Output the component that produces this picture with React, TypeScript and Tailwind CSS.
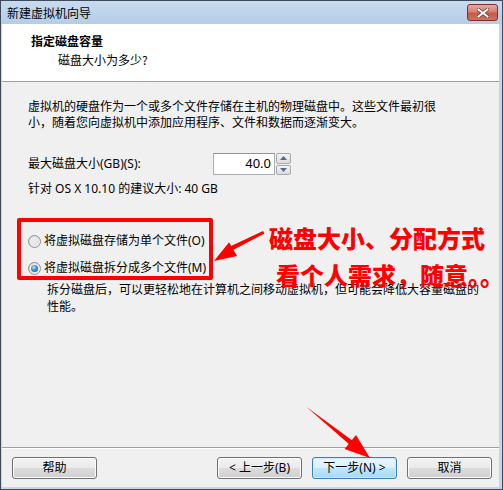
import React from 'react';

const ui = { fontFamily: '"Noto Sans", "Noto Sans CJK SC", sans-serif' };
const cjk = { fontFamily: '"Noto Sans CJK SC", sans-serif' };

function Radio({ checked }: { checked?: boolean }) {
  return (
    <span className="relative inline-flex h-[13px] w-[13px] shrink-0 items-center justify-center rounded-full border border-[#8e8f8f] bg-gradient-to-br from-[#d4d4d4] to-[#f8f8f8]">
      <span className="h-[9px] w-[9px] rounded-full bg-gradient-to-br from-[#f0f0f0] to-[#e0e0e0]">
        {checked && (
          <span className="m-[1px] block h-[7px] w-[7px] rounded-full bg-[radial-gradient(circle_at_40%_35%,#b9e2ff_0%,#3d8fd2_45%,#1d4e80_100%)]" />
        )}
      </span>
    </span>
  );
}

function Btn({ label, primary }: { label: string; primary?: boolean }) {
  return (
    <button
      className={
        primary
          ? 'flex h-[22px] w-[85px] items-center justify-center rounded-[3px] border border-[#3c7fb1] bg-[linear-gradient(#eaf6fd_0%,#d9f0fc_50%,#bee6fd_51%,#a7d9f5_100%)] text-[12px] text-black shadow-[inset_0_0_0_1px_#cbeafb]'
          : 'flex h-[22px] w-[85px] items-center justify-center rounded-[3px] border border-[#707070] bg-[linear-gradient(#f2f2f2_0%,#ebebeb_50%,#dddddd_51%,#cfcfcf_100%)] text-[12px] text-black shadow-[inset_0_0_0_1px_#fcfcfc]'
      }
      style={ui}
    >
      {label}
    </button>
  );
}

export default function App() {
  return (
    <div className="relative h-[490px] w-[503px] overflow-hidden" style={ui}>
      <div className="flex h-full w-full flex-col border border-[#3d4b5c] bg-[#c3d7ec] text-[12px] text-black">
        {/* title bar */}
        <div className="flex h-[23px] shrink-0 items-center justify-between bg-gradient-to-b from-[#c8dbef] to-[#b5cde7] pl-[6px] pr-[4px]">
          <span className="pt-[1px] text-[12px] leading-[16px] text-black" style={cjk}>新建虚拟机向导</span>
          <div className="flex h-[17px] w-[31px] items-center justify-center rounded-[3px] border border-[#7a3030] bg-[linear-gradient(#e9a99b_0%,#d8806f_45%,#c75a45_55%,#d0725f_100%)]">
            <svg width="12" height="10" viewBox="0 0 12 10">
              <path d="M1.5 1.5 L10.5 8.5 M10.5 1.5 L1.5 8.5" stroke="#5a2a2a" strokeWidth="3.4" strokeLinecap="square" />
              <path d="M1.5 1.5 L10.5 8.5 M10.5 1.5 L1.5 8.5" stroke="#ffffff" strokeWidth="2" strokeLinecap="square" />
            </svg>
          </div>
        </div>

        {/* client area */}
        <div className="mb-[2px] ml-[1px] mr-[3px] flex flex-1 flex-col bg-[#f0f0f0]">
          <div className="flex h-[58px] shrink-0 flex-col border-b border-[#a0a0a0] bg-white pl-[29px] pt-[9px]">
            <span className="text-[12px] font-bold leading-[16px]" style={cjk}>指定磁盘容量</span>
            <span className="mt-[3px] pl-[27px] text-[12px] leading-[16px]" style={cjk}>磁盘大小为多少?</span>
          </div>

          <div className="flex flex-1 flex-col pl-[26px] pt-[17px]">
            <p className="w-[420px] text-[12px] leading-[16px]">
              虚拟机的硬盘作为一个或多个文件存储在主机的物理磁盘中。这些文件最初很小，随着您向虚拟机中添加应用程序、文件和数据而逐渐变大。
            </p>

            <div className="mt-[22px] flex h-[22px] items-center">
              <span className="w-[185px] leading-[16px]">最大磁盘大小(GB)(S):</span>
              <div className="flex h-[22px] w-[62px] items-center justify-end border border-[#abadb3] border-t-[#8f939c] bg-white pr-[3px] text-[13px]">
                40.0
              </div>
              <div className="ml-[1px] flex h-[22px] w-[15px] flex-col gap-[1px]">
                <div className="flex flex-1 items-center justify-center rounded-[2px] border border-[#a9a9a9] bg-gradient-to-b from-[#f4f4f4] to-[#dcdcdc]">
                  <svg width="7" height="4" viewBox="0 0 7 4"><path d="M0 4 L3.5 0 L7 4 Z" fill="#4f6b96" /></svg>
                </div>
                <div className="flex flex-1 items-center justify-center rounded-[2px] border border-[#a9a9a9] bg-gradient-to-b from-[#f4f4f4] to-[#dcdcdc]">
                  <svg width="7" height="4" viewBox="0 0 7 4"><path d="M0 0 L3.5 4 L7 0 Z" fill="#4f6b96" /></svg>
                </div>
              </div>
            </div>

            <p className="mt-[6px] leading-[16px]">针对 OS X 10.10 的建议大小: 40 GB</p>

            <div className="mt-[36px] flex flex-col gap-[11px]">
              <label className="flex items-center gap-[3px] leading-[16px]">
                <Radio />
                <span>将虚拟磁盘存储为单个文件(O)</span>
              </label>
              <label className="flex items-center gap-[3px] leading-[16px]">
                <Radio checked />
                <span>将虚拟磁盘拆分成多个文件(M)</span>
              </label>
            </div>

            <p className="mt-[5px] w-[462px] pl-[19px] leading-[17px]">
              拆分磁盘后，可以更轻松地在计算机之间移动虚拟机，但可能会降低大容量磁盘的性能。
            </p>
          </div>

          <div className="flex h-[40px] shrink-0 items-start justify-between border-t border-[#a0a0a0] pl-[10px] pr-[7px] pt-[9px] shadow-[inset_0_1px_0_#ffffff]">
            <Btn label="帮助" />
            <div className="flex gap-[10px]">
              <Btn label="< 上一步(B)" />
              <Btn label="下一步(N) >" primary />
              <Btn label="取消" />
            </div>
          </div>
        </div>
      </div>

      {/* annotations */}
      <div className="pointer-events-none absolute left-[17px] top-[218px] h-[62px] w-[196px] rounded-[2px] border-4 border-[#ff0000]" />
      <div
        className="pointer-events-none absolute left-[269px] top-[226px] flex flex-col gap-[13px] whitespace-nowrap text-[24px] font-black leading-[24px] text-[#ff0000]"
        style={cjk}
      >
        <div>磁盘大小、分配方式</div>
        <div className="pl-[7px]">看个人需求，随意。。</div>
      </div>
      <svg className="pointer-events-none absolute left-0 top-0" width="503" height="490" viewBox="0 0 503 490">
        <path d="M263 231 L264.5 233.5 L231 251 L229 247 Z" fill="#ff0000" />
        <path d="M214 261 L229.1 242.2 L237.1 256 Z" fill="#ff0000" />
        <path d="M306 406.5 L308 408 L353 441 L350 445 Z" fill="#ff0000" />
        <path d="M370 458 L344.6 448.9 L356 434.9 Z" fill="#ff0000" />
      </svg>
    </div>
  );
}
